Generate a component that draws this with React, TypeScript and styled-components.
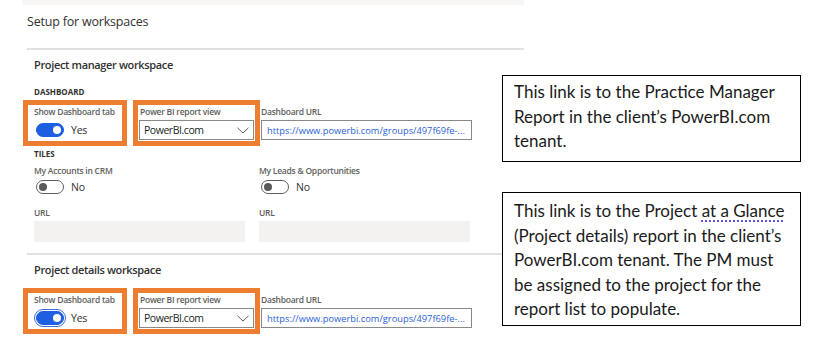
import React from 'react';
import styled, { createGlobalStyle } from 'styled-components';

const GlobalStyle = createGlobalStyle`
  html, body { margin: 0; padding: 0; background: #fff; }
  body { font-family: "Open Sans", "Noto Sans", sans-serif; color: #323130; }
`;

const Canvas = styled.div`
  position: relative;
  width: 835px;
  height: 357px;
  overflow: hidden;
  background: #fff;
`;

const Panel = styled.div`
  margin-left: 22px;
  width: 502px;
  display: flex;
  flex-direction: column;
`;

const TopStrip = styled.div`
  height: 5px;
  background: #f8f7f5;
`;

const PageTitle = styled.div`
  margin: 8px 0 17px 5px;
  font-size: 12.5px;
  letter-spacing: -0.2px;
  line-height: 18px;
  color: #323130;
`;

const Divider = styled.div<{ $mt?: number }>`
  margin: ${(p) => p.$mt ?? 0}px 0 0 5px;
  height: 2px;
  background: #e4e2e0;
`;

const Section = styled.div`
  padding-left: 12px;
  display: flex;
  flex-direction: column;
`;

const SectionTitle = styled.div<{ $mt: number }>`
  margin-top: ${(p) => p.$mt}px;
  font-size: 11px;
  font-weight: 600;
  letter-spacing: -0.35px;
  line-height: 16px;
  color: #323130;
`;

const GroupLabel = styled.div<{ $mt: number }>`
  margin-top: ${(p) => p.$mt}px;
  font-size: 8px;
  font-weight: 700;
  line-height: 12px;
  color: #323130;
  text-transform: uppercase;
`;

const FieldRow = styled.div<{ $mt: number }>`
  display: flex;
  align-items: flex-start;
  margin: ${(p) => p.$mt}px 0 0 -11px;
`;

const Highlight = styled.div<{ $w: number; $pad: number; $gap: number }>`
  box-sizing: border-box;
  width: ${(p) => p.$w}px;
  margin-right: ${(p) => p.$gap}px;
  border: 5px solid #ed7d31;
  padding: 0 ${(p) => p.$pad}px 1px;
  display: flex;
  flex-direction: column;
`;

const PlainField = styled.div<{ $w: number }>`
  width: ${(p) => p.$w}px;
  padding-top: 5px;
  display: flex;
  flex-direction: column;
`;

const FieldLabel = styled.div<{ $mt?: number; $indent?: number }>`
  margin-top: ${(p) => p.$mt ?? 1}px;
  padding-left: ${(p) => p.$indent ?? 0}px;
  font-size: 8.5px;
  font-weight: 600;
  letter-spacing: -0.25px;
  line-height: 12px;
  color: #605e5c;
  white-space: nowrap;
`;

const ToggleLine = styled.div<{ $h: number; $mt: number }>`
  margin-top: ${(p) => p.$mt}px;
  height: ${(p) => p.$h}px;
  display: flex;
  align-items: center;
  gap: 7px;
  padding-left: 2px;
`;

const Switch = styled.span<{ $on: boolean; $focus?: boolean }>`
  position: relative;
  box-sizing: border-box;
  width: 28px;
  height: 14px;
  border-radius: 7px;
  background: ${(p) => (p.$on ? '#1d5fe0' : '#fff')};
  border: 1px solid ${(p) => (p.$on ? '#1d5fe0' : '#605e5c')};
  outline: ${(p) => (p.$focus ? '1px solid #3b6fe0' : 'none')};
  outline-offset: 1px;
  flex: none;
  &::after {
    content: '';
    position: absolute;
    top: 2px;
    ${(p) => (p.$on ? 'right: 2px;' : 'left: 2px;')}
    width: 8px;
    height: 8px;
    border-radius: 50%;
    background: ${(p) => (p.$on ? '#fff' : '#5b5a58')};
  }
`;

const ToggleText = styled.span`
  font-size: 10.5px;
  letter-spacing: -0.2px;
  color: #323130;
`;

const SelectBox = styled.div`
  margin-top: 2px;
  box-sizing: border-box;
  height: 20px;
  border: 1px solid #8a8886;
  display: flex;
  align-items: center;
  justify-content: space-between;
  padding: 0 4px 0 4px;
  font-size: 10.5px;
  letter-spacing: -0.45px;
  color: #201f1e;
`;

const TextInput = styled.div`
  margin-top: 2px;
  box-sizing: border-box;
  height: 20px;
  border: 1px solid #8a8886;
  display: flex;
  align-items: center;
  padding: 0 5px;
  font-size: 9.3px;
  color: #2a62d8;
  white-space: nowrap;
  overflow: hidden;
`;

const ReadonlyInput = styled.div`
  margin-top: 2px;
  height: 21px;
  background: #f3f2f1;
`;

const TilesGrid = styled.div`
  display: grid;
  grid-template-columns: 211px 211px;
  column-gap: 14px;
`;

const TileField = styled.div`
  display: flex;
  flex-direction: column;
`;

const Callout = styled.div<{ $top: number; $h: number; $pt: number }>`
  position: absolute;
  left: 502px;
  top: ${(p) => p.$top}px;
  width: 299px;
  height: ${(p) => p.$h}px;
  box-sizing: border-box;
  border: 1px solid #000;
  background: #fff;
  padding: ${(p) => p.$pt}px 0 0 11px;
  font-family: Lato, "Open Sans", sans-serif;
  font-size: 17px;
  line-height: 24.5px;
  color: #1a1a1a;
`;

const Squiggle = styled.span`
  text-decoration: underline dotted #5b54e0;
  text-decoration-thickness: 2px;
  text-underline-offset: 3px;
`;

const Chevron = () => (
  <svg width="12" height="7" viewBox="0 0 12 7" fill="none">
    <polyline points="0.5,0.8 6,6 11.5,0.8" stroke="#605e5c" strokeWidth="1" />
  </svg>
);

const DashboardRow: React.FC<{ mt: number; focus?: boolean }> = ({ mt, focus }) => (
  <FieldRow $mt={mt}>
    <Highlight $w={104} $pad={6} $gap={6}>
      <FieldLabel>Show Dashboard tab</FieldLabel>
      <ToggleLine $h={20} $mt={2}>
        <Switch $on $focus={focus} />
        <ToggleText>Yes</ToggleText>
      </ToggleLine>
    </Highlight>
    <Highlight $w={127} $pad={1} $gap={1}>
      <FieldLabel $indent={1}>Power BI report view</FieldLabel>
      <SelectBox>
        <span>PowerBI.com</span>
        <Chevron />
      </SelectBox>
    </Highlight>
    <PlainField $w={211}>
      <FieldLabel>Dashboard URL</FieldLabel>
      <TextInput>https://www.powerbi.com/groups/497f69fe-...</TextInput>
    </PlainField>
  </FieldRow>
);

const Tile: React.FC<{ title: string }> = ({ title }) => (
  <TileField>
    <FieldLabel $mt={5}>{title}</FieldLabel>
    <ToggleLine $h={14} $mt={3}>
      <Switch $on={false} />
      <ToggleText>No</ToggleText>
    </ToggleLine>
    <FieldLabel $mt={13}>URL</FieldLabel>
    <ReadonlyInput />
  </TileField>
);

export default function App() {
  return (
    <Canvas>
      <GlobalStyle />
      <Panel>
        <TopStrip />
        <PageTitle>Setup for workspaces</PageTitle>
        <Divider />
        <Section>
          <SectionTitle $mt={7}>Project manager workspace</SectionTitle>
          <GroupLabel $mt={13}>Dashboard</GroupLabel>
          <DashboardRow mt={2} />
          <GroupLabel $mt={2}>Tiles</GroupLabel>
          <TilesGrid>
            <Tile title="My Accounts in CRM" />
            <Tile title="My Leads & Opportunities" />
          </TilesGrid>
        </Section>
        <Divider $mt={11} />
        <Section>
          <SectionTitle $mt={7}>Project details workspace</SectionTitle>
          <DashboardRow mt={10} focus />
        </Section>
      </Panel>
      <Callout $top={75} $h={87} $pt={4}>
        This link is to the Practice Manager
        <br />
        Report in the client’s PowerBI.com
        <br />
        tenant.
      </Callout>
      <Callout $top={192} $h={134} $pt={6}>
        This link is to the Project <Squiggle>at a Glance</Squiggle>
        <br />
        (Project details) report in the client’s
        <br />
        PowerBI.com tenant. The PM must
        <br />
        be assigned to the project for the
        <br />
        report list to populate.
      </Callout>
    </Canvas>
  );
}
